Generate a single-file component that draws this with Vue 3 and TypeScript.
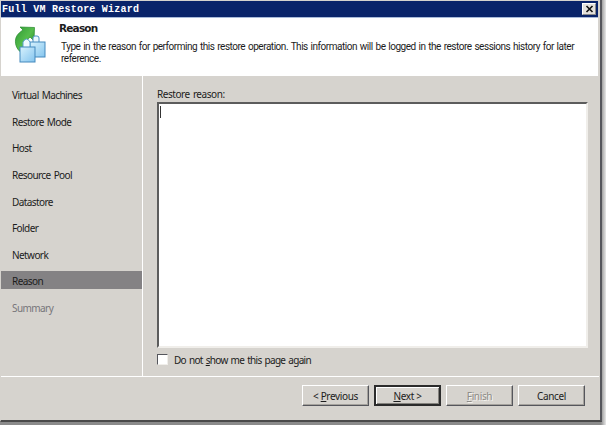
<template>
  <div class="screen">
    <div class="window">
      <div class="titlebar">
        <span class="title">Full VM Restore Wizard</span>
        <button class="close" aria-label="Close">
          <svg width="9" height="8" viewBox="0 0 9 8">
            <path d="M1.5 1 L7.5 7 M7.5 1 L1.5 7" stroke="#111" stroke-width="1.6" />
          </svg>
        </button>
      </div>

      <header class="header">
        <svg class="logo" width="34" height="40" viewBox="0 0 34 40">
          <defs>
            <linearGradient id="arrow" x1="0" y1="0" x2="1" y2="1">
              <stop offset="0" stop-color="#2f9a35" />
              <stop offset="0.5" stop-color="#56bd4c" />
              <stop offset="1" stop-color="#16791f" />
            </linearGradient>
            <linearGradient id="box" x1="0" y1="0" x2="1" y2="1">
              <stop offset="0" stop-color="#d8f2fd" />
              <stop offset="1" stop-color="#83c4ee" />
            </linearGradient>
          </defs>
          <path
            d="M6 3 L20.5 3.5 L20 17 L16 13 C12 17 10 22 9 30 C3 26 1 21 1.5 16 C2 11 6 8 9 6 Z"
            fill="url(#arrow)"
            stroke="#258a2c"
            stroke-width="0.7"
          />
          <path d="M19 18 V14 Q19 12 21 12 H23 Q25 12 25 14 V18" fill="#e8f7fd" stroke="#4b91c4" />
          <rect x="16" y="18" width="15" height="15" fill="url(#box)" stroke="#4489bd" />
          <path d="M9 23 V18 Q12.5 12 16 18 V23" fill="#eefaff" stroke="#5aa2ce" />
          <rect x="6" y="23" width="15" height="15" fill="url(#box)" stroke="#4489bd" />
        </svg>
        <div class="heading">
          <h1>Reason</h1>
          <p>
            <span class="line">Type in the reason for performing this restore operation. This information will be logged in the restore sessions history for later</span>
            <span class="line">reference.</span>
          </p>
        </div>
      </header>

      <div class="body">
        <nav class="steps">
          <div
            v-for="step in steps"
            :key="step"
            class="step"
            :class="{ active: step === current, pending: step === 'Summary' }"
          >
            {{ step }}
          </div>
        </nav>
        <main class="content">
          <label class="label" for="reason">Restore reason:</label>
          <div id="reason" class="textarea"><span class="caret"></span></div>
          <div class="option" @click="skipPage = !skipPage">
            <span class="checkbox">{{ skipPage ? '✓' : '' }}</span>
            <span class="option-text">Do not <u>s</u>how me this page again</span>
          </div>
        </main>
      </div>

      <footer class="footer">
        <button
          v-for="b in buttons"
          :key="b.key"
          class="btn"
          :class="{ primary: b.primary }"
          :disabled="b.disabled"
        >
          <span>{{ b.before }}<u>{{ b.key }}</u>{{ b.after }}</span>
        </button>
        <button class="btn"><span>Cancel</span></button>
      </footer>
    </div>
  </div>
</template>

<script setup lang="ts">
import { ref } from "vue"

interface WizardButton {
  before: string
  key: string
  after: string
  primary?: boolean
  disabled?: boolean
}

const steps: string[] = [
  "Virtual Machines",
  "Restore Mode",
  "Host",
  "Resource Pool",
  "Datastore",
  "Folder",
  "Network",
  "Reason",
  "Summary"
]

const current = ref("Reason")
const skipPage = ref(false)

const buttons: WizardButton[] = [
  { before: "< ", key: "P", after: "revious" },
  { before: "", key: "N", after: "ext >", primary: true },
  { before: "", key: "F", after: "inish", disabled: true }
]
</script>

<style>
body {
  margin: 0;
  overflow: hidden;
}
</style>

<style scoped>
* {
  box-sizing: border-box;
}

.screen {
  width: 606px;
  height: 425px;
  background: linear-gradient(to right, #8b8b8b 601px, #b4b4b4 603px, #e8e8e8 606px);
  font-family: "Noto Sans", "Open Sans", sans-serif;
  font-size: 10px;
  letter-spacing: -0.62px;
  word-spacing: 1px;
  color: #1c1c1c;
}

.window {
  display: flex;
  flex-direction: column;
  width: 602px;
  height: 422px;
  padding: 1px 1px 0 0;
  background: #d6d3ce;
  border-left: 1px solid #d6d3ce;
  border-right: 2px solid #55565c;
  border-bottom: 2px solid #4a4a4a;
}

.titlebar {
  display: flex;
  align-items: center;
  justify-content: space-between;
  width: 597px;
  height: 17px;
  flex: none;
  padding: 0 2px 0 1px;
  background: #0a246a;
  border-bottom: 1px solid #a9bad9;
}

.title {
  font: bold 10px/15px "Liberation Mono", monospace;
  letter-spacing: 0.24px;
  word-spacing: 0;
  color: #fff;
  white-space: pre;
}

.close {
  display: flex;
  align-items: center;
  justify-content: center;
  width: 14px;
  height: 12px;
  padding: 0;
  background: #e4e1dc;
  border: 1px solid;
  border-color: #fff #8a8a8c #8a8a8c #fff;
}

.header {
  display: flex;
  width: 597px;
  height: 58px;
  flex: none;
  padding: 6px 0 0 13px;
  background: #fff;
}

.logo {
  flex: none;
}

.heading {
  padding-left: 11px;
}

h1 {
  margin: -2px 0 0;
  font: bold 10.5px/13px "DejaVu Sans", sans-serif;
  letter-spacing: -0.8px;
}

p {
  margin: 6px 0 0 2px;
}

.line {
  display: block;
  font: 10px/12px Roboto, sans-serif;
  letter-spacing: -0.47px;
  word-spacing: 0.75px;
  white-space: nowrap;
}

.body {
  display: flex;
  height: 300px;
  flex: none;
}

.steps {
  display: flex;
  flex-direction: column;
  gap: 8.6px;
  width: 142px;
  flex: none;
  padding-top: 9.3px;
  border-right: 1px solid #fff;
}

.step {
  height: 18px;
  padding-left: 11px;
  letter-spacing: -0.58px;
  line-height: 20px;
  white-space: nowrap;
}

.step.active {
  background: #848284;
}

.step.pending {
  color: #77757a;
}

.content {
  display: flex;
  flex-direction: column;
  align-items: flex-start;
  padding: 11px 0 0 14px;
}

.label {
  height: 15px;
  line-height: 15px;
  letter-spacing: -0.45px;
}

.textarea {
  width: 431px;
  height: 246px;
  padding: 2px 1px;
  background: #fff;
  border: 2px solid;
  border-color: #5c5c5c #f0eeea #f0eeea #5c5c5c;
}

.caret {
  display: block;
  width: 1px;
  height: 12px;
  background: #333;
}

.option {
  display: flex;
  align-items: center;
  gap: 6px;
  height: 14px;
  margin-top: 5px;
}

.checkbox {
  width: 11px;
  height: 11px;
  margin-top: -1px;
  background: #fff;
  border: 1px solid;
  border-color: #55565c #f0eeea #f0eeea #55565c;
  font-size: 8px;
  line-height: 9px;
}

.option-text {
  letter-spacing: -0.7px;
  word-spacing: 1.1px;
  white-space: nowrap;
}

.footer {
  display: flex;
  gap: 5px;
  flex: 1;
  padding: 8px 0 0 301px;
  border-top: 1px solid #fff;
}

.btn {
  width: 67px;
  height: 21px;
  padding: 0;
  background: #d6d3ce;
  border: 1px solid;
  border-color: #fff #55565c #55565c #fff;
  box-shadow: inset -1px -1px 0 #a5a29d;
  color: #1c1c1c;
  font: inherit;
  line-height: 20px;
  letter-spacing: -0.35px;
}

.btn.primary {
  border: 2px solid #2b2b2b;
  box-shadow: inset 1px 1px 0 #fff, inset -1px -1px 0 #84827d;
  line-height: 18px;
}

.btn:disabled {
  color: #8e8c88;
  text-shadow: 1px 1px 0 #f4f2ee;
}
</style>
